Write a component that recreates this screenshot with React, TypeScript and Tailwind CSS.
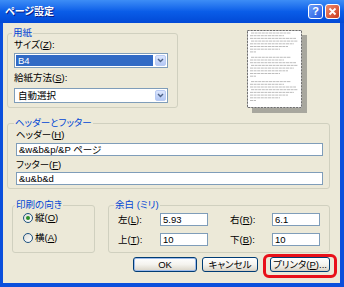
// Windows XP style "ページ設定" (Page Setup) dialog
import type { ReactNode } from 'react';

const FONT = "font-['Liberation_Sans','Noto_Sans_CJK_JP',sans-serif] [font-feature-settings:'palt']";

const Group = ({
  label,
  className,
  children,
}: {
  label: string;
  className?: string;
  children: ReactNode;
}) => (
  <fieldset className={`border border-[#D0D0BF] rounded-[3px] ${className ?? ''}`}>
    <legend className="px-[1px] ml-[-2px] text-[#0046D5] leading-[12px]">{label}</legend>
    {children}
  </fieldset>
);

const Key = ({ k }: { k: string }) => (
  <>
    (<span className="underline underline-offset-1">{k}</span>)
  </>
);

const ComboArrow = () => (
  <div className="w-[11px] my-[1px] mr-[1px] rounded-[2px] border border-[#B9CBF3] bg-linear-to-b from-[#DCE6FD] to-[#B3C7F4] flex items-center justify-center">
    <svg width="7" height="5" viewBox="0 0 7 5" aria-hidden="true">
      <path d="M1 1 L3.5 3.5 L6 1" fill="none" stroke="#4D6185" strokeWidth="1.4" />
    </svg>
  </div>
);

const Combo = ({ value, selected = false }: { value: string; selected?: boolean }) => (
  <div className="flex h-[15px] w-[154px] border border-[#7F9DB9] bg-white">
    <div className="flex-1 flex p-[1px] pr-[2px]">
      <span
        className={`flex-1 flex items-center pl-[2px] ${
          selected ? 'bg-[#316AC5] text-white' : ''
        }`}
      >
        {value}
      </span>
    </div>
    <ComboArrow />
  </div>
);

const TextBox = ({ value, className }: { value: string; className?: string }) => (
  <div
    className={`h-[13px] border border-[#7F9DB9] bg-white flex items-center pl-[2px] whitespace-nowrap ${className ?? ''}`}
  >
    {value}
  </div>
);

const Radio = ({ checked, children }: { checked?: boolean; children: ReactNode }) => (
  <div className="flex items-center h-[12px]">
    <span className="w-[10px] h-[10px] rounded-full border border-[#1C5180] bg-linear-to-br from-[#DCDCD7] to-white flex items-center justify-center">
      {checked && <span className="w-[4px] h-[4px] rounded-full bg-[#2A8F2A]" />}
    </span>
    <span className="ml-[2px]">{children}</span>
  </div>
);

const XpButton = ({
  children,
  className,
  isDefault = false,
}: {
  children: ReactNode;
  className?: string;
  isDefault?: boolean;
}) => (
  <button
    className={`h-[15px] rounded-[3px] border border-[#003C74] bg-linear-to-b from-white via-[#F4F3EE] to-[#D9D4C7] flex items-center justify-center leading-none whitespace-nowrap ${
      isDefault ? 'shadow-[inset_0_0_0_1px_#9DBBEB]' : 'shadow-[inset_0_-1px_0_#D6D0C5]'
    } ${className ?? ''}`}
  >
    {children}
  </button>
);

// tiny page preview with greeked text lines
const Preview = () => {
  const pattern = [40, 34, 46, 48, 44, 38, 30, 6];
  const lines: { y: number; len: number; x: number }[] = [];
  let y = 3;
  for (let block = 0; block < 3; block++) {
    pattern.forEach((len, i) => {
      lines.push({ y, len, x: i === 0 || i === 3 ? 4 : 3 });
      y += 2.7;
    });
    y += 2.7;
  }
  return (
    <svg width="60" height="83" viewBox="0 0 60 83" aria-hidden="true">
      <rect x="5" y="5" width="55" height="78" fill="#A8A79E" />
      <rect x="0.5" y="0.5" width="54" height="77" fill="#FFFFFF" stroke="#C8C8C8" />
      <rect
        x="0.5"
        y="0.5"
        width="54"
        height="77"
        fill="none"
        stroke="#6F6F6F"
        strokeDasharray="2 1.2"
      />
      {lines.map((l, i) => (
        <line
          key={i}
          x1={l.x}
          y1={l.y}
          x2={Math.min(l.x + l.len, 51)}
          y2={l.y}
          stroke="#B4B4B4"
          strokeWidth="0.9"
          strokeDasharray="3 0.6"
        />
      ))}
    </svg>
  );
};

const TitleBar = () => (
  <div className="h-[23px] shrink-0 flex items-center pl-[5px] pr-[4px] bg-linear-to-b from-[#3D8DF6] via-[#0A5DE8] to-[#0349D6]">
    <span className="flex-1 text-white font-bold text-[10px] [text-shadow:1px_1px_0_#0A1C85]">
      ページ設定
    </span>
    <div className="flex gap-[2px]">
      <span className="w-[15px] h-[15px] rounded-[3px] border border-white bg-linear-to-br from-[#6E9EF9] to-[#2458E0] flex items-center justify-center text-white font-bold text-[11px] leading-none">
        ?
      </span>
      <span className="w-[15px] h-[15px] rounded-[3px] border border-white bg-linear-to-br from-[#EE8A6C] to-[#C9381A] flex items-center justify-center">
        <svg width="9" height="9" viewBox="0 0 9 9" aria-hidden="true">
          <path d="M1.5 1.5 L7.5 7.5 M7.5 1.5 L1.5 7.5" stroke="#FFFFFF" strokeWidth="1.8" />
        </svg>
      </span>
    </div>
  </div>
);

export default function App() {
  return (
    <div
      className={`w-[344px] h-[287px] flex flex-col bg-[#0A4FDC] text-black text-[9.5px] leading-[12px] ${FONT}`}
    >
      <TitleBar />
      <div className="flex-1 ml-[3px] mr-[4px] mb-[4px] bg-[#ECE9D8] px-[4px] flex flex-col">
        {/* paper + preview */}
        <div className="flex items-start mt-[4px]">
          <Group label="用紙" className="w-[171px] pl-[6px] pb-[4px]">
            <div>
              サイズ<Key k="Z" />:
            </div>
            <div className="mt-[2px]">
              <Combo value="B4" selected />
            </div>
            <div className="mt-[4px]">
              給紙方法<Key k="S" />:
            </div>
            <div className="mt-[4px]">
              <Combo value="自動選択" />
            </div>
          </Group>
          <div className="ml-[69px] mt-[3px]">
            <Preview />
          </div>
        </div>

        {/* header / footer */}
        <Group label="ヘッダーとフッター" className="w-[323px] mt-[4px] pl-[8px] pb-[3px]">
          <div>
            ヘッダー<Key k="H" />
          </div>
          <TextBox value="&w&b&p/&P ページ" className="mt-[2px] w-[307px]" />
          <div className="mt-[3px]">
            フッター<Key k="F" />
          </div>
          <TextBox value="&u&b&d" className="mt-[1px] w-[307px]" />
        </Group>

        {/* orientation + margins */}
        <div className="flex items-start mt-[10px]">
          <Group label="印刷の向き" className="w-[83px] ml-[5px] pl-[4px] pb-[8px]">
            <div className="ml-[6px] mt-[1px]">
              <Radio checked>
                縦<Key k="O" />
              </Radio>
            </div>
            <div className="ml-[6px] mt-[8px]">
              <Radio>
                横<Key k="A" />
              </Radio>
            </div>
          </Group>
          <Group label="余白 (ミリ)" className="w-[222px] ml-[13px] pl-[7px] pb-[6px]">
            <div className="flex items-center mt-[2px]">
              <span className="ml-[2px] w-[42px]">
                左<Key k="L" />:
              </span>
              <TextBox value="5.93" className="w-[48px]" />
              <span className="ml-[22px] w-[42px]">
                右<Key k="R" />:
              </span>
              <TextBox value="6.1" className="w-[48px]" />
            </div>
            <div className="flex items-center mt-[7px]">
              <span className="ml-[2px] w-[42px]">
                上<Key k="T" />:
              </span>
              <TextBox value="10" className="w-[48px]" />
              <span className="ml-[22px] w-[42px]">
                下<Key k="B" />:
              </span>
              <TextBox value="10" className="w-[48px]" />
            </div>
          </Group>
        </div>

        {/* buttons */}
        <div className="flex items-start mt-[4px]">
          <XpButton isDefault className="ml-[126px] w-[64px]">
            OK
          </XpButton>
          <XpButton className="ml-[5px] w-[56px]">キャンセル</XpButton>
          <div className="relative ml-[12px]">
            <XpButton className="w-[60px]">
              プリンタ<Key k="P" />...
            </XpButton>
            {/* red highlight annotation */}
            <span className="absolute left-[-7px] right-[-7px] top-[-3px] bottom-[-6px] border-[3px] border-[#E8101A] rounded-[6px] pointer-events-none" />
          </div>
        </div>
      </div>
    </div>
  );
}
